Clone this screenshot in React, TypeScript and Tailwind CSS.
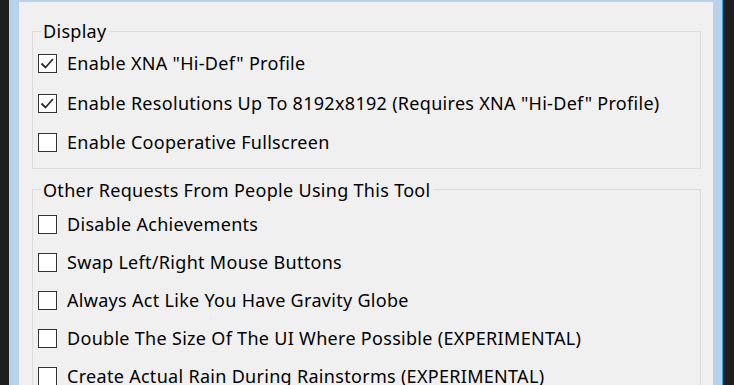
import React from "react";

const displayOptions = [
  { label: 'Enable XNA "Hi-Def" Profile', checked: true },
  {
    label: 'Enable Resolutions Up To 8192x8192 (Requires XNA "Hi-Def" Profile)',
    checked: true,
  },
  { label: "Enable Cooperative Fullscreen", checked: false },
];

const otherOptions = [
  { label: "Disable Achievements", checked: false },
  { label: "Swap Left/Right Mouse Buttons", checked: false },
  { label: "Always Act Like You Have Gravity Globe", checked: false },
  { label: "Double The Size Of The UI Where Possible (EXPERIMENTAL)", checked: false },
  { label: "Create Actual Rain During Rainstorms (EXPERIMENTAL)", checked: false },
];

function CheckRow({ label, checked, h }: { label: string; checked: boolean; h: string }) {
  return (
    <div className={`flex items-center ${h}`}>
      <div className="ml-[5px] w-[19px] h-[19px] border border-[#333333] bg-white flex items-center justify-center shrink-0">
        {checked && (
          <svg width="17" height="17" viewBox="0 0 17 17">
            <polyline
              points="2.5,8.5 6.5,12.5 14,4"
              fill="none"
              stroke="#2b2b2b"
              strokeWidth="1.8"
            />
          </svg>
        )}
      </div>
      <span className="ml-[10px] text-[18px] tracking-[0.3px] text-black whitespace-nowrap">
        {label}
      </span>
    </div>
  );
}

export default function App() {
  return (
    <div
      className="w-[734px] h-[385px] bg-[#1e1e1e] flex overflow-hidden"
      style={{ fontFamily: '"Noto Sans", "Open Sans", sans-serif' }}
    >
      <div className="ml-[9px] w-[713px] bg-[#b9d1ea] pl-[10px] pr-[9px] pt-[2px] flex">
        <div className="flex-1 bg-[#f0f0f0] pl-[13px] pr-[12px] pt-[18px]">
          <fieldset className="border border-[#dcdcdc] pl-0 pr-0 pb-[5px] pt-[2px] m-0">
            <legend className="ml-[8px] px-[2px] text-[18px] tracking-[0.3px] leading-[22px] text-black">
              Display
            </legend>
            {displayOptions.map((o) => (
              <CheckRow key={o.label} label={o.label} checked={o.checked} h="h-[39.5px]" />
            ))}
          </fieldset>
          <fieldset className="mt-[10px] border border-[#dcdcdc] pl-0 pr-0 pt-[5px] m-0">
            <legend className="ml-[8px] px-[2px] text-[18px] tracking-[0.3px] leading-[22px] text-black">
              Other Requests From People Using This Tool
            </legend>
            {otherOptions.map((o) => (
              <CheckRow key={o.label} label={o.label} checked={o.checked} h="h-[38px]" />
            ))}
          </fieldset>
        </div>
      </div>
      <div className="w-[1px] bg-[#29a3e0]" />
    </div>
  );
}
